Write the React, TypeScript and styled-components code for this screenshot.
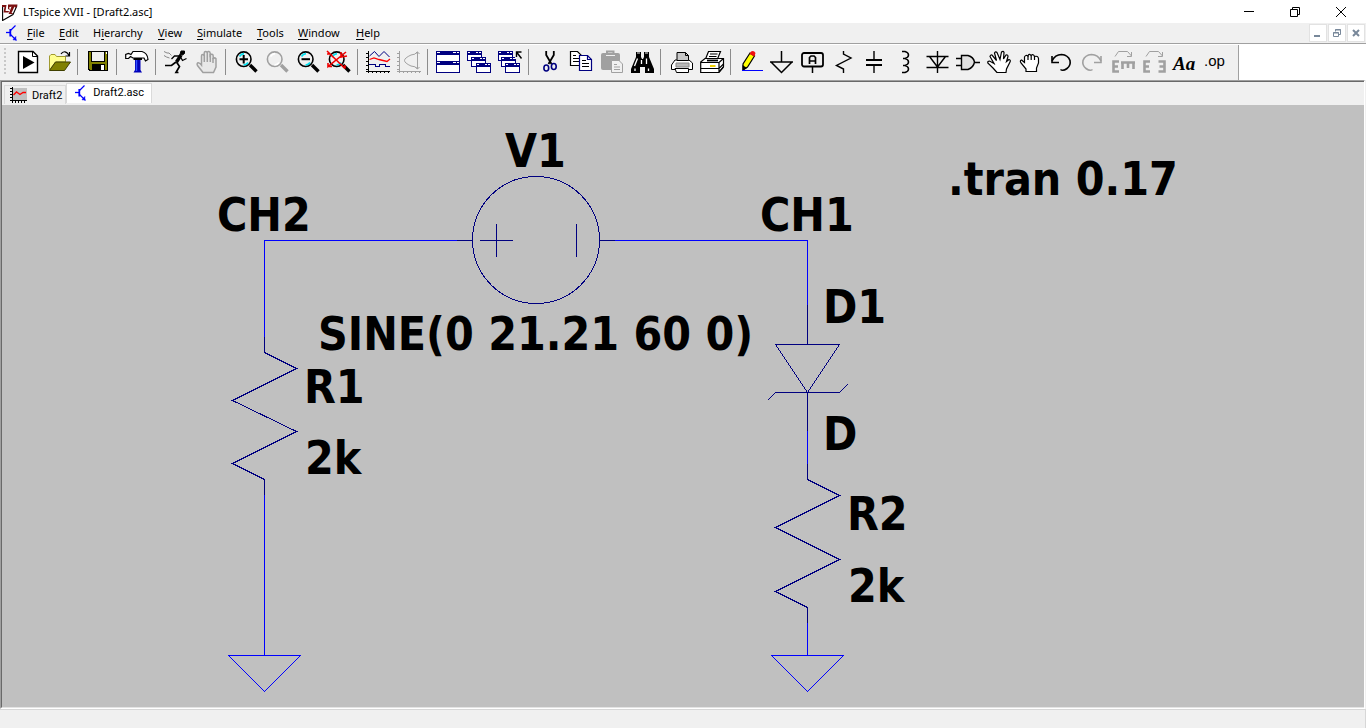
import React from "react";
import styled, { createGlobalStyle } from "styled-components";

const face = "#f0f0f0";
const navy = "#000080";
const blue = "#0000ff";
const gray = "#a0a0a0";

const GlobalStyle = createGlobalStyle`
  * { box-sizing: border-box; }
  body {
    margin: 0;
    background: ${face};
    color: #000;
    font-family: "Noto Sans", "Open Sans", sans-serif;
    font-size: 11px;
  }
  button {
    margin: 0;
    padding: 0;
    border: 0;
    background: none;
    color: inherit;
    font: inherit;
  }
  svg { display: block; flex: none; }
`;

const Window = styled.div`
  display: flex;
  flex-direction: column;
  min-height: 100vh;
`;

const TitleBar = styled.header`
  display: flex;
  align-items: center;
  height: 23px;
  padding: 0 2px;
  background: #fff;
`;

const Title = styled.h1`
  flex: 1;
  margin: 0 0 0 5px;
  font-size: 11px;
  font-weight: 400;
  line-height: 22px;
`;

const CaptionButton = styled.button`
  display: flex;
  align-items: center;
  justify-content: center;
  width: 46px;
  height: 21px;
`;

const MenuBar = styled.nav`
  display: flex;
  align-items: center;
  height: 20px;
  padding: 0 1px 0 6px;
`;

const MenuList = styled.div`
  display: flex;
  flex: 1;
  gap: 14px;
  margin-left: 8px;
`;

const MenuItem = styled.button<{ $width: number }>`
  width: ${(p) => p.$width}px;
  line-height: 20px;
  text-align: left;
  white-space: nowrap;
  u { text-underline-offset: 2px; }
`;

const ChildControls = styled.div`
  display: flex;
  gap: 1px;
`;

const ChildButton = styled.button`
  display: flex;
  align-items: center;
  justify-content: center;
  width: 18px;
  height: 18px;
  border: 1px solid #e2e2e2;
  background: #fff;
`;

const ToolBand = styled.div`
  display: flex;
  height: 37px;
  border-top: 1px solid ${gray};
  background: #fff;
`;

const ToolBar = styled.div`
  display: flex;
  align-items: center;
  margin-top: 1px;
  padding: 0 7px 1px 4px;
  border-right: 1px solid ${gray};
  background: ${face};
`;

const Grip = styled.span`
  width: 2px;
  height: 28px;
  margin-right: 6px;
  background: repeating-linear-gradient(#c8c8c8 0 2px, transparent 2px 4px);
`;

const ToolButton = styled.button`
  display: flex;
  align-items: center;
  justify-content: center;
  width: 31px;
  height: 32px;
`;

const Separator = styled.span`
  width: 8px;
  height: 26px;
  &::before {
    content: "";
    display: block;
    width: 1px;
    height: 100%;
    margin-left: 3px;
    background: #8c8c8c;
  }
`;

const Workspace = styled.main`
  display: flex;
  flex: 1;
  flex-direction: column;
  margin-right: 1px;
  border-top: 1px solid ${gray};
  border-left: 1px solid ${gray};
  border-right: 1px solid #fff;
  border-bottom: 1px solid #fff;
`;

const Sunken = styled.div`
  display: flex;
  flex: 1;
  flex-direction: column;
  border-top: 1px solid #696969;
  border-left: 1px solid #696969;
  border-bottom: 1px solid #e3e3e3;
`;

const TabRow = styled.div`
  display: flex;
  align-items: flex-start;
  height: 23px;
  padding: 1px 0 0 2px;
`;

const Tab = styled.button<{ $active?: boolean }>`
  display: flex;
  align-items: center;
  gap: 5px;
  height: ${(p) => (p.$active ? 20 : 19)}px;
  margin-top: ${(p) => (p.$active ? 0 : 2)}px;
  padding: ${(p) => (p.$active ? "0 7px 2px 8px" : "0 3px 0 5px")};
  border: 1px solid #dadada;
  border-bottom: 0;
  background: ${(p) => (p.$active ? "#fff" : face)};
  font-family: Roboto, sans-serif;
`;

const Canvas = styled.section`
  flex: 1;
  overflow: hidden;
  background: #c0c0c0;
`;

const StatusBar = styled.footer`
  height: 19px;
  border-top: 1px solid #d7d7d7;
  border-right: 1px solid #d7d7d7;
`;

const SchematicText = styled.text`
  fill: #000;
  font-family: "DejaVu Sans Condensed", "DejaVu Sans", sans-serif;
  font-size: 46px;
  font-weight: 700;
`;

const Lens = ({ color = "#000", handle = "#000", glint = "#00e0f0" }) => (
  <>
    <path d="M16 15L22.5 21.5" stroke={handle} strokeWidth="3.4" />
    <circle cx="9.7" cy="9.2" r="7.3" fill={face} stroke={color} strokeWidth="1.6" />
    <path d="M5.5 6.5Q7 4 10 3.6M14 12.5Q12.5 15 9.5 15" fill="none" stroke={glint} strokeWidth="1.6" />
  </>
);

const MiniWindow = ({ x, y }: { x: number; y: number }) => (
  <>
    <rect x={x + 0.5} y={y + 0.5} width="14" height="9" fill="#fff" stroke={navy} />
    <rect x={x} y={y} width="15" height="4" fill={navy} />
    <path d={`M${x + 1} ${y + 1.5}h2M${x + 9} ${y + 1.5}h1.5M${x + 12} ${y + 1.5}h1.5`} stroke="#fff" />
  </>
);

const axes = "M2.5 1V23M0 21.5H24M0 3.5h3M0 7.5h3M0 11.5h3M0 15.5h3M0 19.5h3M6.5 21v2M10.5 21v2M14.5 21v2M18.5 21v2M22.5 21v2";

const openHand =
  "M8 22.5L2.5 15.5Q1.5 13.5 3 12.8Q4.5 12.5 6.5 15V6Q6.5 4.5 7.8 4.5T9.2 6V3Q9.2 1.5 10.7 1.5T12.2 3V2.5Q12.5 1.2 13.8 1.5T15.2 3.2V5Q15.800 4 17 4.3T18.2 6V9Q19 7.5 20.2 8T21 10V17L18.5 22.5Z";

const transistor = (
  <svg width="13" height="16" viewBox="0 0 13 16" stroke={blue} fill="none">
    <path d="M0 7.500H4" strokeWidth="1.300" />
    <path d="M4.300 4V11.500" strokeWidth="1.800" />
    <path d="M4.500 5.500L9.500 .5M4.500 9.500L10.500 15.500" strokeWidth="1.200" />
    <path d="M9.800 11.500V14.800H7Z" fill={blue} strokeWidth=".600" />
  </svg>
);

type Tool = { name: string; art: React.ReactNode };

const tools: (Tool | null)[] = [
  {
    name: "Run",
    art: (
      <g>
        <path d="M2.500 1.500H17L21.500 6V22.500H2.500Z" fill="#fff" stroke="#000" strokeWidth="1.400" />
        <path d="M16.500 1.500V6.500H21.500" fill="none" stroke="#000" />
        <path d="M7 6L18.500 12.500L7 19Z" />
      </g>
    ),
  },
  {
    name: "Open",
    art: (
      <g>
        <path d="M2.500 20V6L4 4.500H8L9.500 6.500H18.500V12H8.500Z" fill="#ffff90" stroke="#a09a30" />
        <path d="M2.500 20.500L8.500 12H23.500L17.500 20.500Z" fill="#808000" stroke="#404000" />
        <path d="M14 4Q15.500 1.500 18 1.800T22 5.500M22.500 2V6H18.500" fill="none" stroke="#000" strokeWidth="1.200" />
      </g>
    ),
  },
  null,
  {
    name: "Save",
    art: (
      <g shapeRendering="crispEdges">
        <path d="M2 1H22V21H3L2 20Z" />
        <path d="M3 2H21V20H4L3 19Z" fill="#808000" />
        <path d="M5 1H19V12H5Z" />
        <path d="M6 2H18V11H6Z" fill={face} />
        <path d="M6 14H19V21H6Z" />
        <path d="M15 15H18V20H15ZM20 2H21V4H20Z" fill="#fff" />
      </g>
    ),
  },
  null,
  {
    name: "Control Panel",
    art: (
      <g>
        <path d="M10 9H15.500V20L17 22.500H8.500L10 20Z" fill="#0000b8" />
        <path d="M11.500 10V21" stroke="#3050ff" strokeWidth="1.400" />
        <path d="M.7 8.500V4.500L3.500 3.500L6 4.500L8 1.500H17Q22.500 3 23 9.500L20.500 11L19 8H8L5.500 6.500L3.500 8.500Z" fill="#fff" stroke="#000" strokeWidth="1.200" />
        <path d="M8.500 9H17" stroke="#000" strokeWidth="2" />
      </g>
    ),
  },
  null,
  {
    name: "Simulate",
    art: (
      <g fill="none" stroke="#000">
        <path d="M17 1H20.500V3.500L18.500 5L16 4.500Z" fill="#000" />
        <path d="M17 5L12.500 12" strokeWidth="3.400" />
        <path d="M15.500 6H10.500L7.500 9M16.500 7L18.500 10.500L22.500 8.500" strokeWidth="1.300" />
        <path d="M12 12L7.500 15.500L1 15.500M12.500 12L15.500 16.500L12 22.500H14.500" strokeWidth="1.700" />
        <path d="M0 1.500L3 3L5 3L7.500 5.500M0 5.500L2.500 7L5.500 8" stroke="#888" />
      </g>
    ),
  },
  {
    name: "Halt",
    art: (
      <g stroke={gray} strokeWidth="1.500">
        <path d={openHand} fill="#e8e8e8" />
        <path d="M9.300 5V12M12.300 3V12M15.300 4V12M18 8V13" fill="none" />
      </g>
    ),
  },
  null,
  { name: "Zoom in", art: (<g><Lens /><path d="M5.500 9.200H14M9.700 5V13.500" stroke="#000" strokeWidth="2" /></g>) },
  { name: "Pan", art: <Lens color={gray} handle={gray} glint="#fff" /> },
  { name: "Zoom out", art: (<g><Lens /><path d="M5.500 9.200H14" stroke="#000" strokeWidth="2" /></g>) },
  {
    name: "Zoom full extents",
    art: (
      <g>
        <Lens />
        <path d="M0 4H3L6 7M0 1L18 18.500M19 2L1 16.500V13M1 16.500H5M14 2V7L20 6M18 18.500V15" fill="none" stroke="#f00000" strokeWidth="1.600" />
      </g>
    ),
  },
  null,
  {
    name: "Autorange",
    art: (
      <g fill="none">
        <path d={axes} stroke="#000" shapeRendering="crispEdges" />
        <path d="M3.500 6L8.500 1.500L13 6.500L18 1.500L23.500 7" stroke={navy} />
        <path d="M3.500 9.500L8 8L13 9.500L21 11.500L24 9" stroke="#f00" strokeWidth="1.300" />
        <path d="M3 14.500H9.500V16.500H13.500V14.500H19.500V16.500H24" stroke={navy} shapeRendering="crispEdges" />
      </g>
    ),
  },
  {
    name: "Pick visible traces",
    art: (
      <g fill="none" stroke={gray}>
        <path d={axes} shapeRendering="crispEdges" />
        <path d="M20.500 1.500Q18.500 5 14 5Q7.500 8 7.500 10.500T14 16Q18.500 16 20.500 19M20.500 2V19M18.500 4L20.500 2L22.500 4M18.500 17L20.500 19L22.500 17" />
      </g>
    ),
  },
  null,
  {
    name: "Tile",
    art: (
      <g shapeRendering="crispEdges">
        <rect x=".5" y="1.500" width="23" height="21" fill="#fff" stroke={navy} />
        <path d="M0 1H24V5H0ZM0 11H24V15H0Z" fill={navy} />
        <path d="M1 2.500h3M17 2.500h3M21 2.500h2M1 12.500h3M17 12.500h3M21 12.500h2" stroke="#fff" />
      </g>
    ),
  },
  {
    name: "Cascade",
    art: (<g shapeRendering="crispEdges"><MiniWindow x={0} y={1} /><MiniWindow x={4} y={7} /><MiniWindow x={9} y={13} /></g>),
  },
  {
    name: "Close all windows",
    art: (
      <g>
        <g shapeRendering="crispEdges"><MiniWindow x={0} y={1} /><MiniWindow x={3} y={7} /><MiniWindow x={7} y={13} /></g>
        <path d="M17 0H24V9H17Z" fill={face} />
        <path d="M18.500 7V2H23.500M18.500 2L23.500 8.500" fill="none" stroke="#000" strokeWidth="1.400" />
      </g>
    ),
  },
  null,
  {
    name: "Cut",
    art: (
      <g fill="none">
        <path d="M9.200 1V5L14.500 14M16.800 1V5L11.500 14" stroke="#000" strokeWidth="1.800" />
        <ellipse cx="9.300" cy="18" rx="2.400" ry="3" stroke={navy} strokeWidth="1.600" />
        <ellipse cx="16.800" cy="16.500" rx="2.400" ry="3" stroke={navy} strokeWidth="1.600" />
      </g>
    ),
  },
  {
    name: "Copy",
    art: (
      <g strokeWidth="1.200">
        <path d="M2.500 1.500H9.500L13.500 5.500V15.500H2.500Z" fill="#fff" stroke="#000" />
        <path d="M5 5.500H8M5 8.500H11M5 11.500H11" stroke="#000" />
        <path d="M11.500 5.500H19.500L23.500 9.500V20.500H11.500Z" fill="#fff" stroke={navy} />
        <path d="M19.500 5.500V9.500H23.500" fill="none" stroke={navy} />
        <path d="M14 10.500H18M14 13.500H21M14 16.500H21" stroke="#000" />
      </g>
    ),
  },
  {
    name: "Paste",
    art: (
      <g>
        <rect x="2" y="3" width="19" height="17" rx="2" fill={gray} />
        <path d="M8 3V1.500H14.500V3" fill="none" stroke={gray} strokeWidth="2" />
        <path d="M7 5.500H16" stroke={face} />
        <path d="M12.500 10.500H20L23.500 14V22.500H12.500Z" fill={face} stroke={gray} />
        <path d="M15 14.500H18M15 17H21M15 19.500H21" stroke={gray} />
      </g>
    ),
  },
  {
    name: "Find",
    art: (
      <g>
        <path d="M6 2H11V7L12 9H13L14 7V2H19V7L24 19V23H15V17H10V23H1V19L6 7Z" />
        <path d="M7 2h3v2H7zM15 2h3v2h-3z" fill="#777" />
        <path d="M7.500 8.500L4.500 16M11.500 10V14M16.500 8.500V14M5 18.500V21M18.500 18.500V21" stroke="#fff" strokeWidth="1.300" />
      </g>
    ),
  },
  null,
  {
    name: "Print",
    art: (
      <g stroke="#000">
        <path d="M2.500 15L6 10H20L23.500 13V19.500H2.500Z" fill="#fff" />
        <path d="M8 10.500V2.500H16.500L19.500 5.500V10.500Z" fill="#c8c8c8" />
        <path d="M16.500 2.500V5.500H19.500" fill="none" />
        <path d="M7 13H20V17H7Z" fill="#b8b8b8" stroke="#888" />
        <path d="M6 18.500H19.500V22.500H7.500Z" fill="#fff" />
      </g>
    ),
  },
  {
    name: "Print setup",
    art: (
      <g stroke="#000" strokeWidth="1.200">
        <path d="M5.500 9L8.500 1.500H20.500L17.500 9Z" fill="#fff" />
        <path d="M10 4H17.500M9 6.500H16.500" />
        <path d="M.7 12L5 8.500H23.500V16.500L19 22.500H.7Z" fill="#fff" />
        <path d="M.7 12.500H19V22M19 12.500L23.500 8.500M.7 18.500H19L23.500 14M19 22L23.500 17" fill="none" />
        <path d="M10 16H15.500" stroke="#f0d000" strokeWidth="2" />
        <path d="M7 10.500H18" strokeWidth="1.800" />
      </g>
    ),
  },
  null,
  {
    name: "Wire",
    art: (
      <g>
        <path d="M11 3L15.500 6L8.500 17L4 20L4 14Z" fill="#ffff00" stroke="#000" strokeWidth="1.200" />
        <path d="M3.500 15L8 18L3.500 21Z" />
        <path d="M10.500 4L12 1.500Q15 0 16.500 3L15.500 6.500Z" fill="#f01010" />
        <path d="M3 20.500H24" stroke={blue} shapeRendering="crispEdges" />
      </g>
    ),
  },
  { name: "Ground", art: <path d="M11.500 1V12M0 12H23M1 12L11.500 22.500L22 12" fill="none" stroke="#000" strokeWidth="1.500" /> },
  {
    name: "Label net",
    art: (
      <g fill="none" stroke="#000">
        <rect x="1" y="3" width="21" height="13.500" rx="2" strokeWidth="1.800" />
        <path d="M11.500 17V23" strokeWidth="1.500" />
        <path d="M8.500 14V7.500L10 6H13L14.500 7.500V14M8.500 11H14.500" strokeWidth="1.700" />
      </g>
    ),
  },
  { name: "Resistor", art: <path d="M11.500 1V4L19 8L4.500 15.500L11.500 19V23" fill="none" stroke="#000" strokeWidth="1.400" /> },
  {
    name: "Capacitor",
    art: (<g stroke="#000"><path d="M3 10H19M3 15H19" strokeWidth="2" /><path d="M11 1V9.500M11 15V23" strokeWidth="1.400" /></g>),
  },
  {
    name: "Inductor",
    art: <path d="M8 1.500H11Q14.500 2.500 14.500 5T11 8.500H9H11Q14.500 9.500 14.500 12T11 15.500H9H11Q14.500 16.500 14.500 19T11 22.500H8" fill="none" stroke="#000" strokeWidth="1.500" />,
  },
  { name: "Diode", art: <path d="M12.500 1V23M1.500 6.500H23.500M1.500 17.500H23.500M4.500 6.500L12.500 17L20.500 6.500" fill="none" stroke="#000" strokeWidth="1.400" /> },
  {
    name: "Component",
    art: <path d="M5.500 5.500H12Q17.500 7 18.500 12Q17.500 17.500 12 19.500H5.500ZM0 8.500H5M0 15.500H5M18.500 12.500H24" fill="#e0e0e0" stroke="#000" strokeWidth="1.400" />,
  },
  {
    name: "Move",
    art: (
      <g stroke="#000" strokeWidth="1.200">
        <path d="M10 22.500L6 18L.8 13Q.5 11 2.500 11L7 13.500L3 6.500Q3.500 4.500 5 5L9.500 10.500L7.500 3Q8.500 1 10 2.500L13 9.500L14.500 2Q16.500 .5 17 2.500L16.500 9L19 5Q21 4.500 21 6.500L19.500 11.500L22 9.500Q24 10 23 12L19.500 19L19 22.500Z" fill="#fff" />
      </g>
    ),
  },
  {
    name: "Drag",
    art: (
      <g stroke="#000" strokeWidth="1.200">
        <path d="M8 21.500V19L3 13Q1.500 10.500 3.500 10L6.500 12.500V7Q7.500 4.500 10 6Q11 3 13 5.500Q15.500 3.500 16.500 6.500Q20 5.500 20.500 8.500V13L18.500 18V21.500Z" fill="#fff" />
        <path d="M10 6V10M13.200 5.500V10M16.500 6.500V10" />
      </g>
    ),
  },
  {
    name: "Undo",
    art: (
      <g fill="none" stroke="#000" strokeWidth="1.600">
        <path d="M3 11Q6 4.500 12.500 4.500Q19 5 21 10.500Q22 15.500 18 18.500T11.500 19.500" />
        <path d="M3 6V12.500H10" />
      </g>
    ),
  },
  {
    name: "Redo",
    art: (
      <g fill="none" stroke={gray} strokeWidth="1.600">
        <path d="M21 11Q18 4.500 11.500 4.500Q5 5 3 10.500Q2 15.500 6 18.500T12.500 19.500" />
        <path d="M21 6V12.500H14" />
      </g>
    ),
  },
  {
    name: "Rotate",
    art: (
      <g fill="none" stroke={gray}>
        <path d="M4 6.500L7.500 1.500H16.500L20.500 6M20.500 2V6.500H16" />
        <path d="M8 11.500H2.500V21.500H8M2.500 16.500H7M10 12.500H24M11.500 12.500V19M17 12.500V18M22.500 12.500V19" strokeWidth="2.600" />
      </g>
    ),
  },
  {
    name: "Mirror",
    art: (
      <g fill="none" stroke={gray}>
        <path d="M4 6.500L7.500 1.500H16.500L20.500 6M20.500 2V6.500H16" />
        <path d="M8 11.500H2.500V21.500H8M2.500 16.500H7M16.500 11.500H22.500V21.500H16.500M22.500 16.500H17.500" strokeWidth="2.600" />
      </g>
    ),
  },
  {
    name: "Text",
    art: <text x="0" y="20" fontFamily="Liberation Serif, serif" fontSize="19" fontStyle="italic" fontWeight="700">Aa</text>,
  },
  {
    name: "SPICE directive",
    art: <text x="0" y="16" fontFamily="Liberation Sans, sans-serif" fontSize="15">.op</text>,
  },
];

const menus: [string, string, string, number][] = [
  ["", "F", "ile", 18],
  ["", "E", "dit", 20],
  ["H", "i", "erarchy", 51],
  ["", "V", "iew", 25],
  ["", "S", "imulate", 46],
  ["", "T", "ools", 27],
  ["", "W", "indow", 44],
  ["", "H", "elp", 26],
];

const labels: [number, number, string][] = [
  [505, 167, "V1"],
  [217, 231, "CH2"],
  [318, 350, "SINE(0 21.21 60 0)"],
  [304, 403, "R1"],
  [305, 474, "2k"],
  [760, 231, "CH1"],
  [823, 323, "D1"],
  [823, 450, "D"],
  [847, 530, "R2"],
  [848, 602, "2k"],
  [948, 195, ".tran 0.17"],
];

const Schematic = () => (
  <svg width="1200" height="600" viewBox="2 105 1200 600" fill="none" shapeRendering="crispEdges">
    <g stroke={blue}>
      <path d="M457 240.500H264.500V337M264.500 495V655.500M615 240.500H807.500V305M807.500 431V464M807.500 623V655.500" />
      <path d="M228.500 655.500H300.500L264.500 691.500ZM771.500 655.500H843.500L807.500 691.500Z" />
    </g>
    <g stroke={navy}>
      <circle cx="536" cy="240" r="63.500" />
      <path d="M457 240.500H472M600 240.500H615M480 240.500H513M496.500 224V257M576.500 224V257" />
      <path d="M264.500 337V352.500L296.500 368.500L232.500 400.500L296.500 431.500L232.500 463.500L264.500 479.500V495" />
      <path d="M807.500 305V344.500M775.500 344.500H839.500L807.500 392.500ZM767.500 400.500L775.500 392.500H839.500L847.500 384.500M807.500 392.500V431" />
      <path d="M807.500 464V479.500L839.500 495.500L775.500 527.500L839.500 559.500L775.500 591.500L807.500 607.500V623" />
    </g>
    {labels.map(([x, y, text]) => (
      <SchematicText key={`${x}-${y}`} x={x} y={y}>{text}</SchematicText>
    ))}
  </svg>
);

export default function App() {
  return (
    <Window>
      <GlobalStyle />
      <TitleBar>
        <svg width="16" height="18" viewBox="0 0 16 18">
          <path d="M.6 3.500V17.500L11 11.500L15 2.500" fill="#fff" stroke="#000" strokeWidth="1.100" />
          <path d="M0 2H4.500L3.500 8H7L6.500 9.500H1.500L2.500 4H0ZM6 1.500H15.500L14.500 4.500H13L12.500 3.500L9.500 10H11L10.500 11H6.500L7 10L9.500 3.500L7 4.500L8 7L6 6Z" fill="#7c1010" />
        </svg>
        <Title>LTspice XVII - [Draft2.asc]</Title>
        <CaptionButton aria-label="Minimize">
          <svg width="10" height="10"><path d="M0 4.500H10" stroke="#000" /></svg>
        </CaptionButton>
        <CaptionButton aria-label="Restore">
          <svg width="10" height="10" fill="none" stroke="#000"><path d="M.5 2.500H7.500V9.500H.5ZM2.500 2.500V.5H9.500V7.500H7.500" /></svg>
        </CaptionButton>
        <CaptionButton aria-label="Close">
          <svg width="10" height="10" stroke="#000"><path d="M0 0L10 10M10 0L0 10" /></svg>
        </CaptionButton>
      </TitleBar>

      <MenuBar>
        {transistor}
        <MenuList>
          {menus.map(([before, key, after, width]) => (
            <MenuItem key={key + after} $width={width}>{before}<u>{key}</u>{after}</MenuItem>
          ))}
        </MenuList>
        <ChildControls>
          <ChildButton aria-label="Minimize document">
            <svg width="10" height="10"><path d="M1 8H7" stroke="#78889a" strokeWidth="2" /></svg>
          </ChildButton>
          <ChildButton aria-label="Restore document">
            <svg width="10" height="10" fill="none" stroke="#78889a"><path d="M1.500 4.500H6.500V8.500H1.500ZM1 5H7M3.500 3.500V1.500H8.500V6.500H7M3 2H9" /></svg>
          </ChildButton>
          <ChildButton aria-label="Close document">
            <svg width="10" height="10"><path d="M2 2L8 8M8 2L2 8" stroke="#78889a" strokeWidth="2" /></svg>
          </ChildButton>
        </ChildControls>
      </MenuBar>

      <ToolBand>
        <ToolBar role="toolbar">
          <Grip />
          {tools.map((tool, i) =>
            tool ? (
              <ToolButton key={tool.name} aria-label={tool.name}>
                <svg width="24" height="24" viewBox="0 0 24 24" overflow="visible">{tool.art}</svg>
              </ToolButton>
            ) : (
              <Separator key={i} />
            )
          )}
        </ToolBar>
      </ToolBand>

      <Workspace>
        <Sunken>
          <TabRow>
            <Tab>
              <svg width="17" height="16" viewBox="0 0 17 16" fill="none">
                <path d="M3 1H17V13H3Z" fill="#c0c0c0" />
                <path d="M2.500 0V16M0 13.500H17M0 1.500h3M0 4.500h3M0 7.500h3M0 10.500h3M5.500 13v3M8.500 13v3M11.500 13v3M14.500 13v3" stroke="#000" shapeRendering="crispEdges" />
                <path d="M3.500 8L6.500 5L10 7.500L13 5.500H16" stroke="#f00" strokeWidth="1.400" />
              </svg>
              Draft2
            </Tab>
            <Tab $active>{transistor}Draft2.asc</Tab>
          </TabRow>
          <Canvas><Schematic /></Canvas>
        </Sunken>
      </Workspace>
      <StatusBar />
    </Window>
  );
}
